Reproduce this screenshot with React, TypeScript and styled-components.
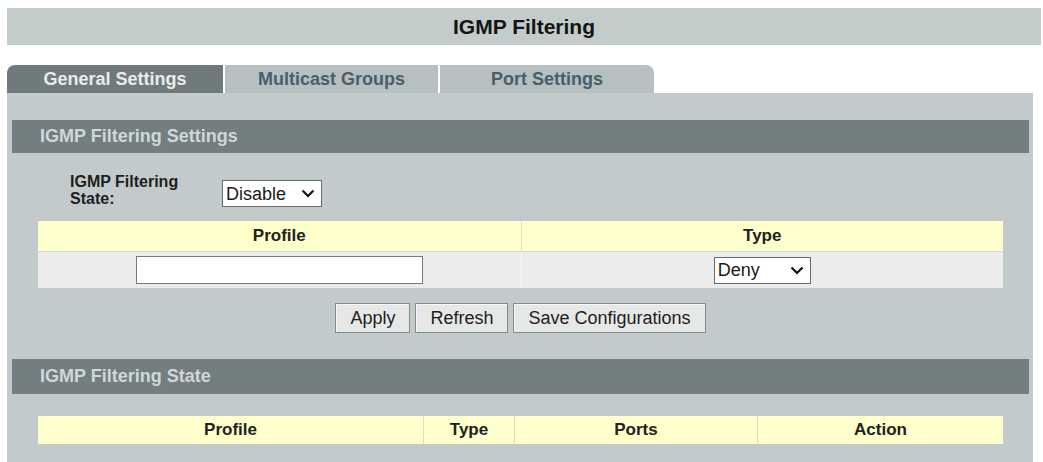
import React from 'react';
import styled, { createGlobalStyle } from 'styled-components';

const GlobalStyle = createGlobalStyle`
  body {
    margin: 0;
    background: #ffffff;
    font-family: 'Liberation Sans', Arial, sans-serif;
  }
`;

const Chevron: React.FC = () => (
  <svg width="14" height="9" viewBox="0 0 14 9">
    <polyline points="1.5,1.5 7,7 12.5,1.5" fill="none" stroke="#111" strokeWidth="2.2" strokeLinejoin="miter" />
  </svg>
);

interface DropdownProps {
  value: string;
  options: string[];
  width: number;
}

const Dropdown: React.FC<DropdownProps> = ({ value, options, width }) => (
  <SelectWrap $width={width}>
    <SelectBox defaultValue={value}>
      {options.map((o) => (
        <option key={o}>{o}</option>
      ))}
    </SelectBox>
    <ArrowSlot>
      <Chevron />
    </ArrowSlot>
  </SelectWrap>
);

const App: React.FC = () => {
  return (
    <>
      <GlobalStyle />
      <Page>
        <TitleBar>IGMP Filtering</TitleBar>

        <TabRow>
          <Tab $active $width={216} $corner="left">General Settings</Tab>
          <Tab $width={213}>Multicast Groups</Tab>
          <Tab $width={214} $corner="right">Port Settings</Tab>
        </TabRow>

        <Panel>
          <SectionHeader>IGMP Filtering Settings</SectionHeader>

          <SettingRow>
            <SettingLabel>
              IGMP Filtering
              <br />
              State:
            </SettingLabel>
            <Dropdown value="Disable" options={['Disable', 'Enable']} width={100} />
          </SettingRow>

          <Grid>
            <thead>
              <tr>
                <HeadCell style={{ width: '50%' }}>Profile</HeadCell>
                <HeadCell>Type</HeadCell>
              </tr>
            </thead>
            <tbody>
              <tr>
                <DataCell>
                  <TextInput type="text" />
                </DataCell>
                <DataCell>
                  <Dropdown value="Deny" options={['Deny', 'Permit']} width={97} />
                </DataCell>
              </tr>
            </tbody>
          </Grid>

          <ButtonRow>
            <Button>Apply</Button>
            <Button>Refresh</Button>
            <Button>Save Configurations</Button>
          </ButtonRow>

          <SectionHeader $tall>IGMP Filtering State</SectionHeader>

          <Grid $gap={22}>
            <thead>
              <tr>
                <HeadCell $short style={{ width: 385 }}>Profile</HeadCell>
                <HeadCell $short style={{ width: 90 }}>Type</HeadCell>
                <HeadCell $short style={{ width: 242 }}>Ports</HeadCell>
                <HeadCell $short>Action</HeadCell>
              </tr>
            </thead>
          </Grid>
        </Panel>
      </Page>
    </>
  );
};

const Page = styled.div`
  padding: 8px 2px 0 7px;
  width: 1034px;
`;

const TitleBar = styled.div`
  height: 37px;
  background: #c3cbcb;
  display: flex;
  align-items: center;
  justify-content: center;
  font-size: 21px;
  font-weight: 700;
  color: #141414;
`;

const TabRow = styled.div`
  display: flex;
  gap: 2px;
  margin-top: 20px;
  height: 28px;
`;

const Tab = styled.div<{ $active?: boolean; $width: number; $corner?: 'left' | 'right' }>`
  width: ${({ $width }) => $width}px;
  display: flex;
  align-items: center;
  justify-content: center;
  font-size: 18px;
  font-weight: 700;
  background: ${({ $active }) => ($active ? '#6e7a7b' : '#b6c0c1')};
  color: ${({ $active }) => ($active ? '#e9eded' : '#4a5e69')};
  border-top-left-radius: ${({ $corner }) => ($corner === 'left' ? '8px' : '0')};
  border-top-right-radius: ${({ $corner }) => ($corner === 'right' ? '8px' : '0')};
`;

const Panel = styled.div`
  width: 1026px;
  box-sizing: border-box;
  background: #c2cacb;
  padding: 27px 4px 30px 5px;
`;

const SectionHeader = styled.div<{ $tall?: boolean }>`
  height: ${({ $tall }) => ($tall ? 35 : 33)}px;
  background: #727e7f;
  color: #d0d7d7;
  font-size: 18px;
  font-weight: 700;
  display: flex;
  align-items: center;
  padding-left: 28px;
  margin-top: ${({ $tall }) => ($tall ? 26 : 0)}px;
`;

const SettingRow = styled.div`
  display: flex;
  align-items: flex-end;
  padding: 20px 0 0 58px;
`;

const SettingLabel = styled.div`
  width: 152px;
  font-size: 16px;
  font-weight: 700;
  line-height: 17px;
  color: #1e1e1e;
`;

const SelectWrap = styled.div<{ $width: number }>`
  position: relative;
  display: inline-block;
  width: ${({ $width }) => $width}px;
  height: 27px;
  vertical-align: middle;
`;

const SelectBox = styled.select`
  appearance: none;
  -webkit-appearance: none;
  width: 100%;
  height: 100%;
  box-sizing: border-box;
  border: 1px solid #666b6b;
  border-radius: 0;
  background: #ffffff;
  font-family: 'Liberation Sans', Arial, sans-serif;
  font-size: 18px;
  color: #1a1a1a;
  padding: 0 0 0 3px;
  outline: none;
`;

const ArrowSlot = styled.span`
  position: absolute;
  right: 7px;
  top: 9px;
  display: flex;
  pointer-events: none;
`;

const Grid = styled.table<{ $gap?: number }>`
  width: 965px;
  margin: ${({ $gap }) => $gap ?? 14}px 0 0 26px;
  border-collapse: collapse;
  table-layout: fixed;
`;

const HeadCell = styled.th<{ $short?: boolean }>`
  height: ${({ $short }) => ($short ? 28 : 30)}px;
  padding: 0;
  background: #ffffcc;
  font-size: 17px;
  font-weight: 700;
  color: #222222;
  text-align: center;
  border-left: 1px solid #dedec2;

  &:first-child {
    border-left: none;
  }
`;

const DataCell = styled.td`
  height: 36px;
  padding: 0;
  background: #ececec;
  text-align: center;
  border-top: 1px solid #d6d6d6;
  border-left: 1px solid #f6f6f6;

  &:first-child {
    border-left: none;
  }
`;

const TextInput = styled.input`
  width: 287px;
  height: 28px;
  box-sizing: border-box;
  border: 1px solid #767a7a;
  background: #ffffff;
  vertical-align: middle;
  outline: none;
`;

const ButtonRow = styled.div`
  display: flex;
  justify-content: center;
  gap: 5px;
  margin: 15px 0 0 26px;
  width: 965px;
`;

const Button = styled.button`
  height: 30px;
  padding: 0 14px;
  font-family: 'Liberation Sans', Arial, sans-serif;
  font-size: 18px;
  color: #1e1e1e;
  background: #e6e7e7;
  border: 1px solid #858a8a;
  border-radius: 0;
  box-shadow: inset 1px 1px 0 #f8f8f8;
  cursor: pointer;
`;

export default App;
